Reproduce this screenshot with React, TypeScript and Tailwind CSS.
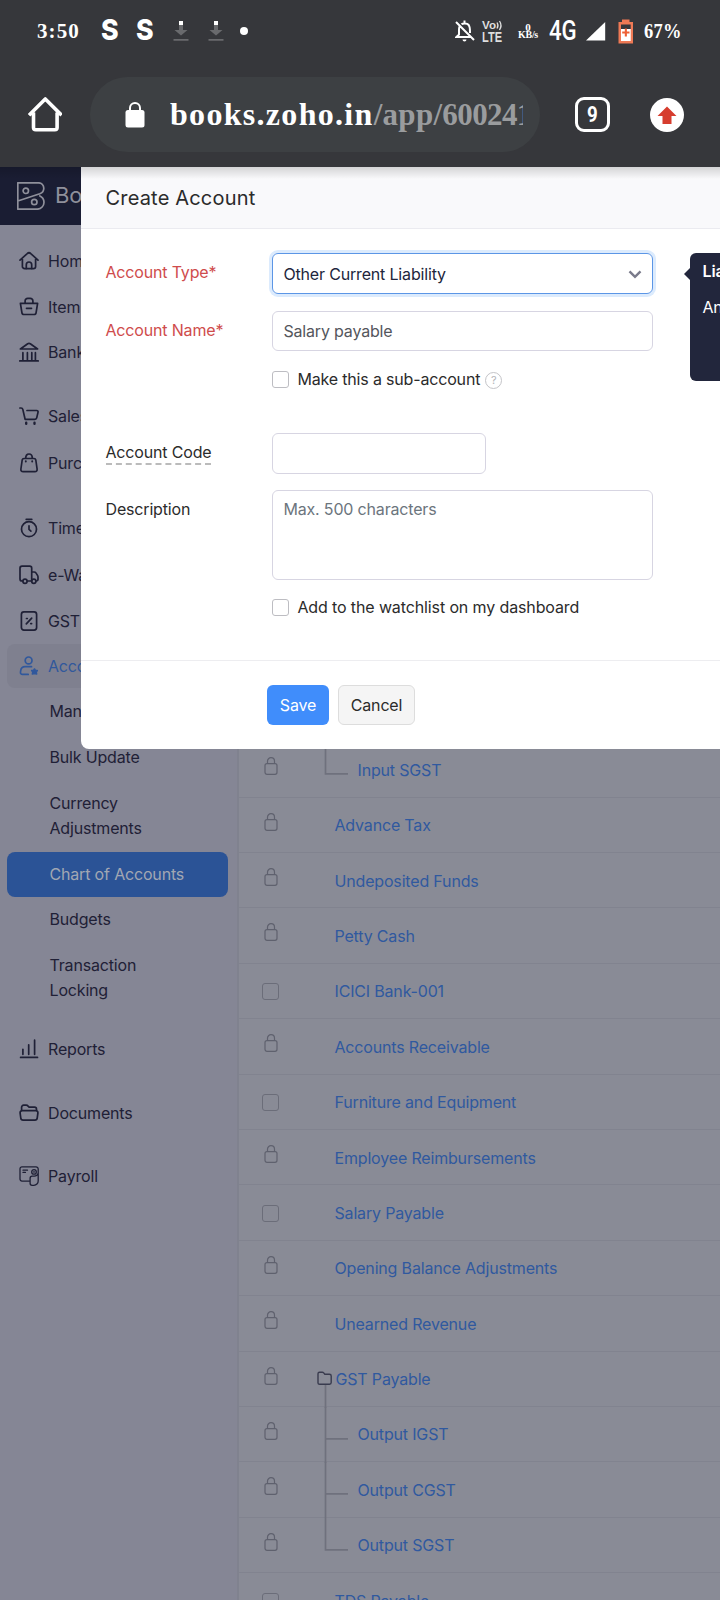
import React from "react";

type IconName =
  | "home" | "items" | "bank" | "cart" | "bag" | "timer" | "truck" | "gst"
  | "accountant" | "reports" | "documents" | "payroll";

function NavIcon({ name }: { name: IconName }) {
  const paths: Record<IconName, React.ReactNode> = {
    home: (<><path d="M1 9.2 8.2 2.6a2.6 2.6 0 0 1 3.6 0L19 9.2M3.4 8v7.4A2.2 2.2 0 0 0 5.6 17.600h8.800a2.200 2.200 0 0 0 2.200-2.200V8" /><path d="M7.300 17.500v-3.800a2.700 2.700 0 0 1 5.400 0v3.800" /></>),
    items: (<><path d="M1.400 6.300h17.200l-1.500 9.300a2.200 2.200 0 0 1-2.200 1.900H5.100a2.200 2.200 0 0 1-2.200-1.900z" /><path d="M6.100 6V4a2.600 2.600 0 0 1 2.600-2.600h2.600A2.600 2.600 0 0 1 13.900 4v2M7.500 11.300h5" /></>),
    bank: (<><path d="M1.400 7 8.700 1.800a2.300 2.300 0 0 1 2.600 0L18.600 7zM3.900 10.700v7M8.400 10.700v7M12.800 10.700v7M16.400 10.700v7M.8 18.900h18.400" /></>),
    cart: (<><path d="M.9 2h1.200c1 0 1.500.5 1.700 1.400l2.300 9.900h9.800c1 0 1.600-.5 1.800-1.400l1.300-5.500c.3-1.200-.3-1.900-1.400-1.900H8" /><path d="M7.200 16.800v1M15.500 16.800v1" strokeWidth="2.400" /></>),
    bag: (<><path d="M5 5.500h10c1 0 1.600.5 1.800 1.500l1.300 9c.2 1.700-.6 2.600-2.200 2.600H4.100c-1.600 0-2.400-.9-2.200-2.600l1.300-9c.2-1 .8-1.500 1.800-1.500zM6.700 5.300C6.700 2.500 8 1 10 1s3.300 1.500 3.300 4.300" /><path d="M6.800 8.300v.3M13.200 8.300v.3" strokeWidth="1.900" /></>),
    timer: (<><circle cx="10" cy="11.200" r="7.500" /><path d="M7.200 1.300h5.600M10 7.800v3.600l1.900 1.700" /></>),
    truck: (<><path d="M3.700 16H3a2 2 0 0 1-2-2V3.200a2 2 0 0 1 2-2h7.700a2 2 0 0 1 2 2V16H8.300M12.800 7h2.300c.8 0 1.400.3 1.800.9l1.600 2.500c.3.500.5 1 .5 1.600v2.200A1.700 1.700 0 0 1 17.300 16" /><circle cx="6" cy="16.300" r="2.100" /><circle cx="14.800" cy="16.300" r="2.100" /></>),
    gst: (<><rect x="2.400" y=".9" width="15.200" height="18.200" rx="2.500" /><path d="m7.300 12.900 5.400-5.800M7.500 7.500h.8M11.800 12.600h.8" /></>),
    accountant: (<><circle cx="9.600" cy="4.400" r="3.400" /><path d="M12.500 10.700H6c-2.500 0-3.900 1.400-4.300 3.900l-.2 1.400c-.2 1.600.6 2.400 2 2.400h5.700" /><path fill="currentColor" strokeWidth="1.600" d="m15.500 13 .9 1.500h1.900l-1.100 1.600.4 1.900-2.100-.5-2.100.5.400-1.900-1.100-1.600h1.900z" /></>),
    reports: (<path d="M3.900 10.300v5M9.700 5.800v9.500M15.600 1.200v14.100M1.600 18.400h16.900" />),
    documents: (<><path d="M2.600 7.800V4.200a2 2 0 0 1 2-2h2.500c.8 0 1.500.3 2 .9l1 1.100h5.400a2 2 0 0 1 2 2v1.600M3.100 7.700h13.800a2 2 0 0 1 2 2.300l-.7 5.200a2.300 2.300 0 0 1-2.300 2H4.100a2.300 2.300 0 0 1-2.300-2L1.100 10a2 2 0 0 1 2-2.300z" /></>),
    payroll: (<g strokeWidth="1.300"><path d="M10.800 15.100H3a2 2 0 0 1-2-2V2.800a2 2 0 0 1 2-2h14a2.200 2.200 0 0 1 2.200 2.200v12a4.300 4.300 0 0 1-4.300 4.300h-1.800a2 2 0 0 1-2-2v-4.900c0-1.400.7-2.200 2-2.200h2.100c2 0 3.600-1.300 4-3.300" /><circle cx="15" cy="5.900" r="2.300" /><path d="M15 5.500v.8M4 4.200h4.500M4 6.400h2.400" /></g>),
  };
  return (
    <svg viewBox="0 0 20 20" className="size-5 shrink-0 overflow-visible" fill="none" stroke="currentColor" strokeWidth="1.700" strokeLinecap="round" strokeLinejoin="round">
      {paths[name]}
    </svg>
  );
}

const primaryNav: { label: string; icon: IconName; cls: string }[] = [
  { label: "Home", icon: "home", cls: "mt-[14px]" },
  { label: "Items", icon: "items", cls: "mt-[2px]" },
  { label: "Banking", icon: "bank", cls: "mt-px" },
  { label: "Sales", icon: "cart", cls: "mt-5" },
  { label: "Purchases", icon: "bag", cls: "mt-[3px]" },
  { label: "Time Tracking", icon: "timer", cls: "mt-[21px]" },
  { label: "e-Way Bills", icon: "truck", cls: "mt-[3px]" },
  { label: "GST Filing", icon: "gst", cls: "mt-[2px]" },
  { label: "Accountant", icon: "accountant", cls: "mt-px rounded-lg bg-[#7f808f] text-[#31589c]" },
];

const lowerNav: { label: string; icon: IconName; cls: string }[] = [
  { label: "Reports", icon: "reports", cls: "mt-[24px]" },
  { label: "Documents", icon: "documents", cls: "mt-5" },
  { label: "Payroll", icon: "payroll", cls: "mt-[19px]" },
];

function NavRow({ label, icon, cls }: { label: string; icon: IconName; cls: string }) {
  return (
    <div className={`flex h-11 shrink-0 items-center gap-[9px] whitespace-nowrap pl-3 ${cls}`}>
      <NavIcon name={icon} />
      <span>{label}</span>
    </div>
  );
}

function Sidebar() {
  return (
    <aside className="flex w-[237px] shrink-0 flex-col bg-[#858695] text-[#1f2036]">
      <div className="flex h-[58px] shrink-0 items-center gap-[10px] bg-[#1a1d33] pl-[17px] text-[#8f909b]">
        <svg viewBox="0 0 28 28" className="size-7" fill="none" stroke="currentColor" strokeWidth="1.700" strokeLinejoin="round">
          <path d="M.8.800h20.700a5.500 5.500 0 0 1 5.300 5.400c0 2.800-1.500 4.600-4 5.500L.8 19V.800zM.8 18.800v8.400h19.700a7 7 0 0 0 6.500-7c0-3.300-2-5.500-4.800-6.800" />
          <circle cx="8.800" cy="8.800" r="2.700" />
          <circle cx="17.300" cy="20" r="2.700" />
        </svg>
        <span className="-mt-px text-[22px]">Books</span>
      </div>
      <nav className="flex flex-col px-[7px]">
        {primaryNav.map((n) => <NavRow key={n.label} {...n} />)}
        <div className="flex flex-col leading-[25px]">
          <span className="mt-[11px] pl-[42.500px]">Manual Journals</span>
          <span className="mt-[21px] pl-[42.500px]">Bulk Update</span>
          <span className="mt-[21px] pl-[42.500px]">Currency<br />Adjustments</span>
          <span className="mt-[11px] flex h-[45px] w-[221px] items-center rounded-lg bg-[#2b5396] pl-[42.500px] text-[#a2a7b3]">Chart of Accounts</span>
          <span className="mt-[10px] pl-[42.500px]">Budgets</span>
          <span className="mt-[21px] pl-[42.500px]">Transaction<br />Locking</span>
        </div>
        {lowerNav.map((n) => <NavRow key={n.label} {...n} />)}
      </nav>
    </aside>
  );
}

type Tree = "none" | "folder" | "mid" | "last";
const accounts: { name: string; check?: boolean; tree?: Tree }[] = [
  { name: "Input SGST", tree: "last" },
  { name: "Advance Tax" },
  { name: "Undeposited Funds" },
  { name: "Petty Cash" },
  { name: "ICICI Bank-001", check: true },
  { name: "Accounts Receivable" },
  { name: "Furniture and Equipment", check: true },
  { name: "Employee Reimbursements" },
  { name: "Salary Payable", check: true },
  { name: "Opening Balance Adjustments" },
  { name: "Unearned Revenue" },
  { name: "GST Payable", tree: "folder" },
  { name: "Output IGST", tree: "mid" },
  { name: "Output CGST", tree: "mid" },
  { name: "Output SGST", tree: "last" },
  { name: "TDS Payable", check: true },
];

function TreeMark({ tree }: { tree: Tree }) {
  return (
    <svg viewBox="0 0 32 56" className="h-14 w-8 shrink-0 overflow-visible" fill="none" stroke="#6f717d" strokeWidth="1.700">
      {tree === "folder" && (
        <>
          <path d="M1 31v-9.300c0-.9.500-1.500 1.500-1.500h2.800c.6 0 1 .2 1.400.7l1.100 1.400h4.600c1.200 0 1.800.6 1.800 1.700v6.600c0 1.100-.6 1.700-1.700 1.700H2.700C1.600 32.300 1 31.900 1 31z" stroke="#393b4e" strokeWidth="1.400" />
          <path d="M8.500 33V56" />
        </>
      )}
      {tree === "mid" && <path d="M8.500 0v56M8.500 31.800h22.500" />}
      {tree === "last" && <path d="M8.500 0v31.800h22.500" />}
    </svg>
  );
}

function AccountRow({ name, check, tree = "none" }: { name: string; check?: boolean; tree?: Tree }) {
  const child = tree === "mid" || tree === "last";
  return (
    <div className="flex h-[55.400px] shrink-0 items-start border-b border-[#81838f]">
      <div className="ml-[22.500px] flex w-[18px] shrink-0 justify-center">
        {check ? (
          <span className="mt-[19.500px] size-[17px] rounded-[3px] border-[1.500px] border-[#6b6d79]" />
        ) : (
          <svg viewBox="0 0 14 18" className="mt-[15px] h-[18px] w-[14px]" fill="none" stroke="#5f616e" strokeWidth="1.200">
            <rect x="1" y="6.600" width="12" height="10.700" rx="2" />
            <path d="M3.500 6.500V4.200a3.500 3.500 0 0 1 7 0v2.300" />
          </svg>
        )}
      </div>
      <div className="ml-[37px] flex h-14 w-8 shrink-0"><TreeMark tree={tree} /></div>
      <span className={`mt-[15.500px] whitespace-nowrap leading-6 text-[#30599f] ${child ? "ml-[9px]" : tree === "folder" ? "-ml-[13px]" : "-ml-[14px]"}`}>{name}</span>
    </div>
  );
}

function BrowserChrome() {
  return (
    <header className="flex h-[167px] shrink-0 flex-col bg-[#36373b] tracking-normal text-white">
      <div className="flex h-[62px] items-center pl-[37px] font-['Liberation_Serif'] font-bold">
        <span className="w-[64px] pt-[2px] text-[21px] tracking-[1.100px]">3:50</span>
        <span className="-mt-[3px] w-[35px] font-['Inter'] text-[29px] font-extrabold leading-none"><span className="inline-block origin-left scale-x-[0.920]">S</span></span>
        <span className="-mt-[3px] w-[37px] font-['Inter'] text-[29px] font-extrabold leading-none"><span className="inline-block origin-left scale-x-[0.920]">S</span></span>
        {[0, 1].map((i) => (
          <svg key={i} viewBox="0 0 16 22" className="mr-[19px] h-[22px] w-4 shrink-0">
            <path d="M6 5h4v5h4.500L8 15.500 1.500 10H6zM.5 19h15v1.800H.5z" fill="#696a6d" />
            <path d="M6 1h4v4H6z" fill="#fff" />
          </svg>
        ))}
        <span className="-ml-[3px] size-2 rounded-full bg-white" />
        <svg viewBox="0 0 20 22" className="ml-[207px] h-[22px] w-5 shrink-0" fill="none" stroke="#fff" strokeWidth="2">
          <path d="M1 2l18 18M4.500 6.500C3.900 8 4 9 4 11v3.500L1.500 17h14M6.500 4.300C8 3 12 3 13.700 5c1.500 2 1.200 5 1.300 8M9.500 3V.5" />
          <path d="M7.500 19.500h4a2 2 0 0 1-4 0z" fill="#fff" stroke="none" />
        </svg>
        <svg viewBox="0 0 22 22" className="ml-[7px] h-[22px] w-[22px] shrink-0 overflow-visible font-['Liberation_Sans'] font-bold" fill="#dedede">
          <text x="0" y="9" fontSize="11" textLength="14" lengthAdjust="spacingAndGlyphs">Vo</text>
          <path d="M15 2.500q2 3 0 6M17.500 1q3 4.500 0 9" stroke="#dedede" fill="none" strokeWidth="1.300" />
          <text x="0" y="21.500" fontSize="14" textLength="20" lengthAdjust="spacingAndGlyphs">LTE</text>
        </svg>
        <span className="ml-[13px] flex w-[22px] shrink-0 flex-col items-center text-[11px] leading-[8px]"><span>0</span><span className="whitespace-nowrap text-[10px] leading-[8px] tracking-[-0.300px]">KB/s</span></span>
        <span className="ml-[10px] w-[28px] shrink-0 font-['Roboto'] text-[27px] font-medium leading-none"><span className="inline-block origin-left scale-x-[0.820]">4G</span></span>
        <svg viewBox="0 0 20 19" className="ml-[9px] h-[19px] w-5 shrink-0"><path d="M0 18.500 19.200 0v18.500z" fill="#fff" /></svg>
        <svg viewBox="0 0 16 25" className="ml-[12px] h-[25px] w-4 shrink-0">
          <path d="M4 .5h7.500V3H15v21.500H.5V3H4z" fill="#ee7955" />
          <path d="M3 5.500h9.700V10H3z" fill="#36373b" /><path d="M3 10h9.700v12H3z" fill="#fff" />
          <path d="M6.800 9.500h2.100v3h2.600v2.100H8.900v3H6.800v-3H4.200v-2.100h2.600z" fill="#ee6035" />
        </svg>
        <span className="ml-[10px] pt-[2px] text-[21px]"><span className="inline-block origin-left scale-x-[0.880] tracking-[0.300px]">67%</span></span>
      </div>
      <div className="mt-[15px] flex h-[75px] items-center">
        <svg viewBox="0 0 34 35" className="ml-[28px] h-[35px] w-[34px] shrink-0" fill="none" stroke="#fff" strokeWidth="3.600" strokeLinejoin="round">
          <path d="M1 18.200 17.300 2 33.600 18.200M5.500 15.500v15c0 1.500.8 2.300 2.300 2.300h19c1.500 0 2.300-.8 2.300-2.300v-15" />
        </svg>
        <div className="ml-[28px] flex h-[75px] w-[450px] shrink-0 items-center rounded-full bg-[#3d4043] pl-[35px]">
          <svg viewBox="0 0 20 26" className="h-[26px] w-5 shrink-0"><rect x=".5" y="8" width="19" height="17.500" rx="2.500" fill="#fff" /><path d="M5 9V6a5 5 0 0 1 10 0v3" fill="none" stroke="#fff" strokeWidth="2" /></svg>
          <div className="ml-[25px] w-[353px] overflow-hidden whitespace-nowrap font-['Liberation_Serif'] text-[32px] font-bold leading-[42px] tracking-[1.300px]">
            books.zoho.in<span className="text-[31px] tracking-[0.300px] text-[#9a9c9e]">/app/</span><span className="text-[31px] tracking-[-0.600px] text-[#9a9c9e]">600241</span>
          </div>
        </div>
        <div className="ml-[35px] flex size-[35px] shrink-0 items-center justify-center rounded-[9px] border-[3.500px] border-white font-['Roboto'] text-[22px] font-bold leading-none"><span className="scale-x-[0.850]">9</span></div>
        <svg viewBox="0 0 34 34" className="ml-[40px] size-[34px] shrink-0"><circle cx="17" cy="17" r="17" fill="#fff" /><path d="M17 8.500 26.500 18h-5v8h-9v-8h-5z" fill="#d63d2e" /></svg>
      </div>
    </header>
  );
}

function CheckBox() {
  return <span className="mt-px size-[17px] shrink-0 rounded-[3px] border-[1.500px] border-[#bdbdc2] bg-white" />;
}

function CreateAccount() {
  return (
    <section className="absolute left-[81px] top-0 flex h-[582px] w-[660px] flex-col overflow-hidden rounded-bl-lg bg-white text-[#21263c]">
      <div className="flex h-[62px] shrink-0 items-center border-b border-[#ebebf0] bg-[#f9f9fb] pl-[24.500px] text-[20px] tracking-[0.180px] text-[#2b2b2b]">
        <span>Create Account</span>
      </div>
      <div className="grid grid-cols-[166.900px_381.100px] items-start pl-[24.500px] leading-6 text-[#2b2b2b]">
        <span className="mt-[31px] text-[#cf4c4c]">Account Type*</span>
        <div className="mt-6 flex h-[41px] items-center justify-between rounded-md border-[1.500px] border-[#5c96e6] pl-[10px] pr-[10px] text-[#21263c] shadow-[0_0_0_3px_#dcebfd]">
          <span>Other Current Liability</span>
          <svg viewBox="0 0 14 9" className="mt-[2px] h-[9px] w-[14px]" fill="none" stroke="#7a7b8b" strokeWidth="2.400"><path d="m1.500 1.300 5.500 5.500 5.500-5.500" /></svg>
        </div>
        <span className="mt-[24px] text-[#cf4c4c]">Account Name*</span>
        <div className="mt-[17px] flex h-10 items-center rounded-md border-[1.500px] border-[#d7d5e2] pl-[10px] text-[#54565c]"><span className="-mt-px">Salary payable</span></div>
        <span />
        <div className="mt-[16px] flex h-6 items-center">
          <CheckBox /><span className="ml-2">Make this a sub-account</span>
          <span className="ml-[5px] mt-[2px] flex size-[17px] items-center justify-center rounded-full border border-[#c4c4c8] text-[11px] leading-none text-[#b4b4b8]">?</span>
        </div>
        <span className="mt-[52px] justify-self-start border-b-2 border-dashed border-[#bbb] pb-px leading-[19px]">Account Code</span>
        <div className="mt-[42px] h-[41px] w-[214px] rounded-md border-[1.500px] border-[#d7d5e2]" />
        <span className="mt-[23px]">Description</span>
        <div className="mt-[16px] flex h-[90px] items-start rounded-md border-[1.500px] border-[#d7d5e2] pl-[10px] pt-[6px] text-[#6c757d]">Max. 500 characters</div>
        <span />
        <div className="mt-[15px] flex h-6 items-center">
          <CheckBox /><span className="ml-2 tracking-[-0.120px]">Add to the watchlist on my dashboard</span>
        </div>
      </div>
      <div className="mt-auto flex h-[89px] shrink-0 items-start gap-[9px] border-t border-[#ededf0] pl-[186px] pt-6">
        <button className="h-10 w-[62px] rounded-md bg-[#408dfb] text-white">Save</button>
        <button className="h-10 w-[77px] rounded-md border-[1.500px] border-[#ddd] bg-[#f5f5f5] text-[#2b2b2b]">Cancel</button>
      </div>
      <div className="absolute left-[609px] top-[86px] flex h-[128px] w-[200px] flex-col rounded-md bg-[#22263c] pl-[12.500px] pt-[6px] leading-6 text-white">
        <svg viewBox="0 0 7 14" className="absolute -left-[6px] top-[14px] h-[14px] w-[7px]"><path d="M7 0 0 7l7 7z" fill="#22263c" /></svg>
        <b className="font-semibold">Liability</b>
        <span className="mt-3">Any</span>
      </div>
    </section>
  );
}

export default function App() {
  return (
    <div className="flex h-[1600px] w-[720px] flex-col overflow-hidden bg-[#898b96] font-['Inter',sans-serif] text-[16px] tracking-[-0.170px]">
      <BrowserChrome />
      <div className="relative flex min-h-0 flex-1 overflow-hidden">
        <Sidebar />
        <main className="flex min-w-0 flex-1 flex-col border-l-2 border-[#80828f] bg-[#898b96] pt-[575.300px]">
          {accounts.map((a) => <AccountRow key={a.name} {...a} />)}
        </main>
        <CreateAccount />
        <div className="absolute inset-x-0 top-0 h-3 bg-gradient-to-b from-black/15 to-transparent" />
      </div>
    </div>
  );
}
